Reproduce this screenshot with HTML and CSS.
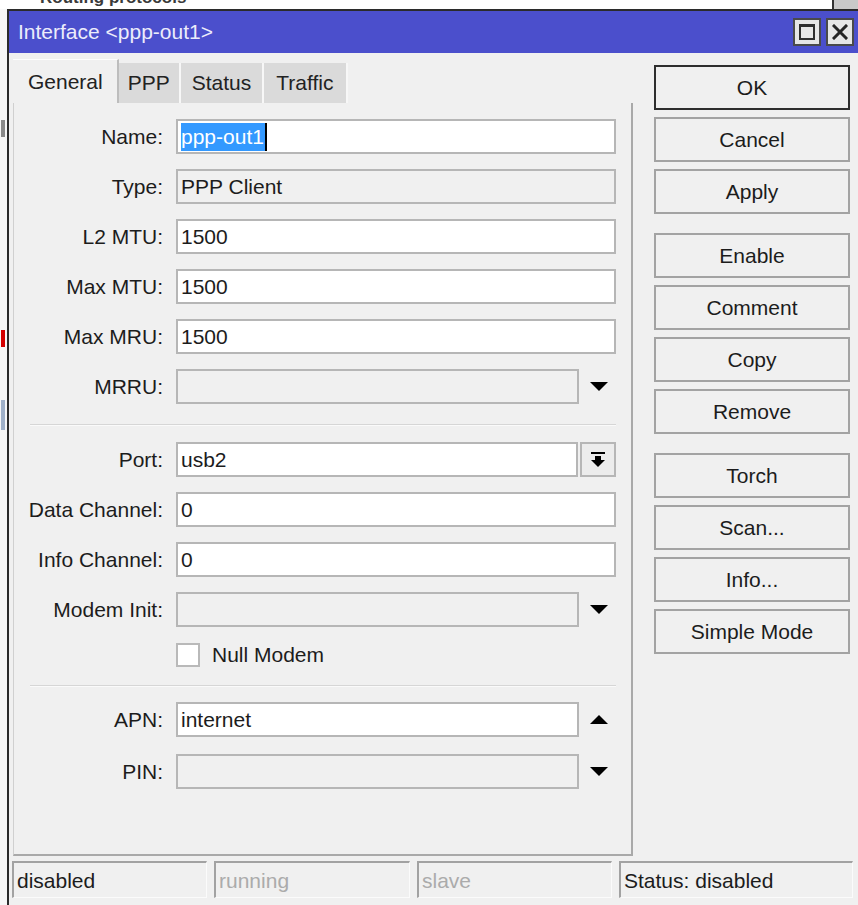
FILE: index.html
```html
<!DOCTYPE html>
<html lang="en">
<head>
<meta charset="utf-8">
<title>Interface &lt;ppp-out1&gt;</title>
<link rel="stylesheet" href="styles.css">
</head>
<body>
<div class="backdrop-top">
  <span class="peek">Routing protocols</span>
  <span class="peek-edge"></span>
</div>
<div class="desk">
  <div class="backdrop-left">
    <i class="mark m1"></i>
    <i class="mark m2"></i>
    <i class="mark m3"></i>
  </div>

  <div class="window">
    <div class="titlebar">
      <span class="title">Interface &lt;ppp-out1&gt;</span>
      <div class="wbtns">
        <span class="wbtn">
          <svg width="16" height="16" viewBox="0 0 16 16"><rect x="1" y="1" width="14" height="14" fill="none" stroke="#2e2e2e" stroke-width="2"/><rect x="0" y="0" width="16" height="3" fill="#2e2e2e"/></svg>
        </span>
        <span class="wbtn">
          <svg width="16" height="16" viewBox="0 0 16 16"><path d="M2 2 L14 14 M14 2 L2 14" stroke="#242424" stroke-width="3" stroke-linecap="square"/></svg>
        </span>
      </div>
    </div>

    <div class="wbody">
      <div class="main">
        <div class="tabs">
          <span class="tab active">General</span>
          <span class="tab t-ppp">PPP</span>
          <span class="tab t-status">Status</span>
          <span class="tab t-traffic">Traffic</span>
        </div>

        <div class="panel">
          <div class="row">
            <span class="lbl">Name:</span>
            <div class="field"><span class="sel">ppp-out1</span></div>
          </div>
          <div class="row">
            <span class="lbl">Type:</span>
            <div class="field off">PPP Client</div>
          </div>
          <div class="row">
            <span class="lbl">L2 MTU:</span>
            <div class="field">1500</div>
          </div>
          <div class="row">
            <span class="lbl">Max MTU:</span>
            <div class="field">1500</div>
          </div>
          <div class="row">
            <span class="lbl">Max MRU:</span>
            <div class="field">1500</div>
          </div>
          <div class="row">
            <span class="lbl">MRRU:</span>
            <div class="field off"></div>
            <span class="trail"><svg width="18" height="9" viewBox="0 0 18 9"><polygon points="0,0 18,0 9,9" fill="#000"/></svg></span>
          </div>

          <div class="sep"></div>

          <div class="row">
            <span class="lbl">Port:</span>
            <div class="field">usb2</div>
            <span class="port-btn"><svg width="14" height="16" viewBox="0 0 14 16"><rect x="0" y="0" width="14" height="2" fill="#000"/><rect x="4" y="4" width="6" height="5" fill="#000"/><polygon points="0,8 14,8 7,15" fill="#000"/></svg></span>
          </div>
          <div class="row">
            <span class="lbl">Data Channel:</span>
            <div class="field">0</div>
          </div>
          <div class="row">
            <span class="lbl">Info Channel:</span>
            <div class="field">0</div>
          </div>
          <div class="row">
            <span class="lbl">Modem Init:</span>
            <div class="field off"></div>
            <span class="trail"><svg width="18" height="9" viewBox="0 0 18 9"><polygon points="0,0 18,0 9,9" fill="#000"/></svg></span>
          </div>
          <div class="check-row">
            <span class="box"></span>
            <span>Null Modem</span>
          </div>

          <div class="sep sep-low"></div>

          <div class="row apn">
            <span class="lbl">APN:</span>
            <div class="field">internet</div>
            <span class="trail"><svg width="18" height="9" viewBox="0 0 18 9"><polygon points="0,9 18,9 9,0" fill="#000"/></svg></span>
          </div>
          <div class="row">
            <span class="lbl">PIN:</span>
            <div class="field off"></div>
            <span class="trail"><svg width="18" height="9" viewBox="0 0 18 9"><polygon points="0,0 18,0 9,9" fill="#000"/></svg></span>
          </div>
        </div>
      </div>

      <div class="actions">
        <span class="btn default">OK</span>
        <span class="btn">Cancel</span>
        <span class="btn">Apply</span>
        <span class="btn group">Enable</span>
        <span class="btn">Comment</span>
        <span class="btn">Copy</span>
        <span class="btn">Remove</span>
        <span class="btn group">Torch</span>
        <span class="btn">Scan...</span>
        <span class="btn">Info...</span>
        <span class="btn">Simple Mode</span>
      </div>
    </div>

    <div class="statusbar">
      <span class="cell c1">disabled</span>
      <span class="cell c2 dim">running</span>
      <span class="cell c3 dim">slave</span>
      <span class="cell c4">Status: disabled</span>
    </div>
  </div>
</div>
</body>
</html>
```

FILE: styles.css
```css
* {
  box-sizing: border-box;
}

html,
body {
  margin: 0;
  padding: 0;
}

body {
  width: 858px;
  height: 905px;
  overflow: hidden;
  background: #fbfbfb;
  font-family: "Liberation Sans", Arial, sans-serif;
  font-size: 21px;
  color: #1c1c1c;
}

/* strip of the window lying behind this dialog */
.backdrop-top {
  height: 9px;
  display: flex;
  overflow: hidden;
  background: #fff;
}

.peek {
  margin: -12px 0 0 40px;
  font-size: 17px;
  font-weight: bold;
  line-height: 20px;
  color: #3a3a3a;
  white-space: nowrap;
}

.peek-edge {
  margin-left: auto;
  width: 26px;
  border-left: 2px solid #333;
  background: #c9c9c9;
}

.desk {
  display: flex;
  height: 896px;
}

.backdrop-left {
  width: 7px;
  flex: none;
  display: flex;
  flex-direction: column;
  background: #f7f7f7;
}

.mark {
  display: block;
  margin-left: 1px;
  width: 4px;
}

.m1 {
  margin-top: 111px;
  height: 17px;
  background: #8a8a8a;
}

.m2 {
  margin-top: 193px;
  height: 17px;
  background: #d40000;
}

.m3 {
  margin-top: 53px;
  height: 30px;
  background: #9fb0c8;
}

/* dialog window */
.window {
  flex: 1;
  display: flex;
  flex-direction: column;
  border-top: 2px solid #2b2b2b;
  border-left: 2px solid #2b2b2b;
  background: #f0f0f0;
}

.titlebar {
  height: 42px;
  flex: none;
  display: flex;
  align-items: center;
  justify-content: space-between;
  padding: 0 4px 0 9px;
  background: #4b4fcc;
}

.title {
  font-size: 21px;
  color: #ececfb;
}

.wbtns {
  display: flex;
  gap: 5px;
}

.wbtn {
  width: 28px;
  height: 28px;
  display: flex;
  align-items: center;
  justify-content: center;
  border: 2px solid #4a4a4a;
  background: #e6e6e6;
}

.wbody {
  display: flex;
  padding: 6px 0 0 4px;
}

.main {
  width: 620px;
  flex: none;
  display: flex;
  flex-direction: column;
}

/* tab strip */
.tabs {
  display: flex;
  align-items: flex-end;
  height: 44px;
}

.tab {
  height: 40px;
  line-height: 40px;
  padding: 0 9px;
  background: #dadada;
  border-right: 2px solid #f7f7f7;
  color: #222;
}

.tab.t-status {
  padding: 0 11px;
}

.tab.t-traffic {
  padding: 0 13px 0 12px;
}

.tab.active {
  height: 44px;
  line-height: 44px;
  padding: 0 14px 0 15px;
  background: #f0f0f0;
  border-top: 1px solid #fdfdfd;
  border-right: 2px solid #bdbdbd;
}

.panel {
  height: 753px;
  flex: none;
  padding: 16px 15px 0 0;
  border-left: 1px solid #d0d0d0;
  border-right: 2px solid #a9a9a9;
  border-bottom: 2px solid #a9a9a9;
}

/* form rows (vertical margins between these blocks collapse) */
.row {
  display: flex;
  align-items: center;
  height: 35px;
  margin-bottom: 15px;
}

.row.apn {
  margin-bottom: 17px;
}

.lbl {
  width: 149px;
  flex: none;
  margin-right: 13px;
  text-align: right;
  white-space: nowrap;
}

.field {
  flex: 1;
  height: 35px;
  padding-left: 3px;
  border: 2px solid #b6b6b6;
  background: #fff;
  line-height: 31px;
  white-space: nowrap;
  overflow: hidden;
}

.field.off {
  background: #f0f0f0;
}

.sel {
  display: inline-block;
  height: 28px;
  line-height: 28px;
  vertical-align: middle;
  padding-right: 1px;
  background: #3399ff;
  color: #fff;
  border-right: 2px solid #000;
  position: relative;
  top: -1px;
}

.trail {
  width: 37px;
  flex: none;
  display: flex;
  align-items: center;
  justify-content: center;
  padding-left: 2px;
}

.port-btn {
  width: 36px;
  height: 35px;
  flex: none;
  margin-left: 2px;
  display: flex;
  align-items: center;
  justify-content: center;
  border: 2px solid #b6b6b6;
  background: #ececec;
}

.check-row {
  display: flex;
  align-items: center;
  height: 24px;
  margin: 16px 0 0 162px;
}

.box {
  width: 24px;
  height: 24px;
  flex: none;
  margin-right: 12px;
  border: 2px solid #b9b9b9;
  background: #fff;
}

.sep {
  height: 2px;
  margin: 20px 0 16px 16px;
  border-top: 1px solid #d6d6d6;
  border-bottom: 1px solid #fafafa;
}

.sep.sep-low {
  margin-top: 18px;
  margin-bottom: 15px;
}

/* command buttons */
.actions {
  width: 196px;
  flex: none;
  margin: 6px 0 0 21px;
  display: flex;
  flex-direction: column;
  gap: 7px;
}

.btn {
  height: 45px;
  display: flex;
  align-items: center;
  justify-content: center;
  border: 2px solid #a3a3a3;
  background: #f0f0f0;
  color: #1c1c1c;
}

.btn.default {
  border-color: #2e2e2e;
}

.btn.group {
  margin-top: 12px;
}

/* status bar */
.statusbar {
  display: flex;
  gap: 7px;
  padding: 5px 0 0 3px;
}

.cell {
  height: 37px;
  padding-left: 3px;
  line-height: 35px;
  border-top: 2px solid #a2a2a2;
  border-left: 2px solid #a2a2a2;
  border-right: 1px solid #fbfbfb;
  border-bottom: 1px solid #fbfbfb;
  white-space: nowrap;
}

.c1 { width: 195px; }
.c2 { width: 196px; }
.c3 { width: 195px; }
.c4 { width: 234px; }

.cell.dim {
  color: #ababab;
}
```
